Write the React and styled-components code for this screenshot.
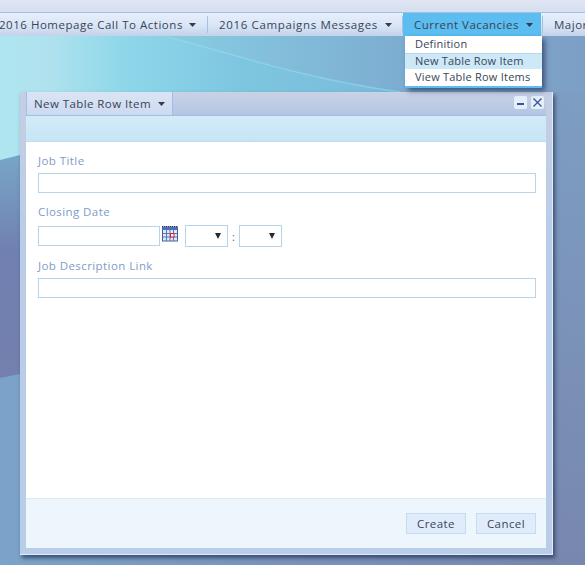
import React from "react";
import styled, { createGlobalStyle } from "styled-components";

const NAV_ITEMS = [
  { label: "2016 Homepage Call To Actions", width: 208, spacing: 0.52 },
  { label: "2016 Campaigns Messages", width: 195, spacing: 0.65 },
  { label: "Current Vacancies", width: 138, spacing: 0.47, active: true },
];

const MENU_ITEMS = ["Definition", "New Table Row Item", "View Table Row Items"];

const Arrow = ({ $big }) => (
  <ArrowIcon viewBox="0 0 7 4" preserveAspectRatio="none" $big={$big}>
    <path d="M0 0h7L3.5 4z" fill="currentColor" />
  </ArrowIcon>
);

const CalendarIcon = () => (
  <svg width="16" height="16" viewBox="0 0 16 16">
    <rect x="0.5" y="1" width="15" height="14" fill="#dfe8fb" stroke="#44609c" />
    <rect x="0.5" y="1" width="15" height="3" fill="#4a6fc0" />
    <path d="M0 0.5h16" stroke="#333" strokeDasharray="1 1" />
    <path d="M4.5 4v11M8 4v11M11.5 4v11M1 7.5h14M1 11h14" stroke="#5876b8" />
    <rect x="8.5" y="7.5" width="3.5" height="3.5" fill="#fff" stroke="#e02020" />
  </svg>
);

// desktop wallpaper behind the window
const Wallpaper = () => (
  <WallpaperSvg viewBox="0 0 585 565">
    <defs>
      <linearGradient id="wpBase" x1="0" y1="0" x2="1" y2="0">
        <stop offset="0" stopColor="#7ba3c9" />
        <stop offset="0.5" stopColor="#7a93bb" />
        <stop offset="1" stopColor="#7887ae" />
      </linearGradient>
      <linearGradient id="wpRight" x1="0" y1="0" x2="0" y2="1">
        <stop offset="0" stopColor="#7ea0c6" />
        <stop offset="1" stopColor="#7887ae" />
      </linearGradient>
      <linearGradient id="wpLeft" x1="0" y1="0" x2="0" y2="1">
        <stop offset="0" stopColor="#78a8c8" />
        <stop offset="0.45" stopColor="#7080b0" />
        <stop offset="1" stopColor="#7480ae" />
      </linearGradient>
      <linearGradient id="wpTeal" x1="0" y1="0" x2="1" y2="0">
        <stop offset="0" stopColor="#aee6f0" />
        <stop offset="0.12" stopColor="#b0e2ee" />
        <stop offset="0.3" stopColor="#8fd8ea" />
        <stop offset="0.6" stopColor="#7ec6e0" />
        <stop offset="1" stopColor="#79bad9" />
      </linearGradient>
      <linearGradient id="wpTop" x1="0" y1="0" x2="1" y2="0">
        <stop offset="0" stopColor="#a8dcea" />
        <stop offset="0.35" stopColor="#86c8e0" />
        <stop offset="0.7" stopColor="#7cacd0" />
        <stop offset="1" stopColor="#7d9fc5" />
      </linearGradient>
    </defs>
    <rect width="585" height="565" fill="url(#wpBase)" />
    <rect x="553" y="36" width="32" height="529" fill="url(#wpRight)" />
    <path d="M0 36H585V92H0Z" fill="url(#wpTop)" />
    <path d="M0 160L40 150V370L0 378Z" fill="url(#wpLeft)" />
    <path d="M0 36H165C235 55 310 80 400 92V120H40V150L0 160Z" fill="url(#wpTeal)" />
    <path
      d="M165 36C235 55 310 80 400 92"
      fill="none"
      stroke="#93dcec"
      strokeWidth="1.5"
      opacity="0.6"
    />
  </WallpaperSvg>
);

const App = () => {
  return (
    <>
      <GlobalStyle />
      <Page>
        <Wallpaper />
        <TopStrip />
        <NavBar>
          {NAV_ITEMS.map((item) => (
            <NavItem
              key={item.label}
              $width={item.width}
              $active={item.active}
              $spacing={item.spacing}
            >
              {item.label}
              <Arrow />
            </NavItem>
          ))}
          <NavItem $width={60} $spacing={0.5}>
            Major
          </NavItem>
        </NavBar>

        <Menu>
          {MENU_ITEMS.map((item, i) => (
            <MenuRow key={item} $hover={i === 1}>
              {item}
            </MenuRow>
          ))}
        </Menu>

        <Dialog>
          <TabBar>
            <Tab>
              New Table Row Item
              <Arrow />
            </Tab>
            <WindowButtons>
              <WindowButton aria-label="minimize">
                <svg width="9" height="9" viewBox="0 0 9 9">
                  <rect x="1" y="5" width="7" height="2" fill="#34549c" />
                </svg>
              </WindowButton>
              <WindowButton aria-label="close">
                <svg width="11" height="11" viewBox="0 0 11 11">
                  <path
                    d="M1.5 1.5l8 8M9.5 1.5l-8 8"
                    stroke="#34549c"
                    strokeWidth="1.3"
                  />
                </svg>
              </WindowButton>
            </WindowButtons>
          </TabBar>
          <Toolbar />
          <Body>
            <Field>
              <Label>Job Title</Label>
              <TextBox />
            </Field>
            <Field>
              <Label>Closing Date</Label>
              <DateRow>
                <DateBox />
                <CalendarSlot>
                  <CalendarIcon />
                </CalendarSlot>
                <TimeSelect>
                  <Arrow $big />
                </TimeSelect>
                <Colon>:</Colon>
                <TimeSelect>
                  <Arrow $big />
                </TimeSelect>
              </DateRow>
            </Field>
            <Field>
              <Label>Job Description Link</Label>
              <TextBox />
            </Field>
          </Body>
          <Footer>
            <FooterButton>Create</FooterButton>
            <FooterButton>Cancel</FooterButton>
          </Footer>
        </Dialog>
      </Page>
    </>
  );
};
export default App;

const GlobalStyle = createGlobalStyle`
  html, body {
    margin: 0;
    padding: 0;
    overflow: hidden;
  }
  body {
    font-family: "Open Sans", "Liberation Sans", sans-serif;
    font-size: 12px;
  }
`;

const Page = styled.div`
  position: relative;
  width: 585px;
  height: 565px;
  overflow: hidden;
`;

const WallpaperSvg = styled.svg`
  position: absolute;
  left: 0;
  top: 0;
  width: 585px;
  height: 565px;
`;

const TopStrip = styled.div`
  position: relative;
  height: 13px;
  background: linear-gradient(180deg, #dfe5f2, #d6dff0);
  border-bottom: 1px solid #a4bfe6;
  box-sizing: border-box;
`;

const NavBar = styled.div`
  position: relative;
  display: flex;
  align-items: stretch;
  height: 23px;
  overflow: hidden;
  background: linear-gradient(180deg, #e6effb 0%, #d9e5f6 55%, #c3d2ea 100%);
`;

const NavItem = styled.div`
  position: relative;
  display: flex;
  flex: none;
  align-items: center;
  box-sizing: border-box;
  width: ${(props) => props.$width}px;
  padding-left: 11px;
  margin-right: ${(props) => (props.$active ? 2 : 0)}px;
  font-size: 11.5px;
  letter-spacing: ${(props) => props.$spacing}px;
  color: #3a4457;
  white-space: nowrap;
  background: ${(props) => (props.$active ? "#5bbdf0" : "transparent")};
  &:first-child {
    padding-left: 0;
    text-indent: -1px;
  }
  &:first-child svg {
    margin-left: 6px;
  }
  &:not(:last-child)::after {
    content: "";
    display: block;
    position: absolute;
    right: ${(props) => (props.$active ? -2 : 0)}px;
    top: 3px;
    bottom: 3px;
    width: 1px;
    background: #a9c0e0;
  }
`;

const ArrowIcon = styled.svg`
  flex: none;
  width: ${(props) => (props.$big ? 6 : 7)}px;
  height: ${(props) => (props.$big ? 6 : 4)}px;
  margin-left: 7px;
  color: ${(props) => (props.$big ? "#222a38" : "#333c4c")};
`;

const Menu = styled.div`
  position: absolute;
  left: 405px;
  top: 36px;
  z-index: 2;
  box-sizing: border-box;
  width: 137px;
  height: 52px;
  background: #fff;
  border-bottom: 2px solid #5bbdf0;
  box-shadow: 3px 3px 5px rgba(30, 45, 85, 0.65);
`;

const MenuRow = styled.div`
  box-sizing: border-box;
  height: ${(props) => (props.$hover ? 16 : 17)}px;
  line-height: ${(props) => (props.$hover ? 14 : 16)}px;
  padding-left: 10px;
  font-size: 11px;
  letter-spacing: 0.22px;
  color: #3a4457;
  white-space: nowrap;
  background: ${(props) => (props.$hover ? "#cde9f8" : "transparent")};
  border-top: ${(props) => (props.$hover ? "1px solid #b5d6ea" : "none")};
`;

const Dialog = styled.div`
  position: absolute;
  left: 20px;
  top: 92px;
  z-index: 1;
  display: flex;
  flex-direction: column;
  box-sizing: border-box;
  width: 533px;
  height: 463px;
  padding: 0 6px 6px 6px;
  background: linear-gradient(180deg, #c6cee3 0%, #b9cde8 30%, #b9cde8 100%);
  border-right: 1px solid #e4ecf6;
  border-bottom: 1px solid #e4ecf6;
  box-shadow: 2px 3px 4px rgba(30, 45, 85, 0.7);
`;

const TabBar = styled.div`
  display: flex;
  flex: none;
  align-items: stretch;
  justify-content: space-between;
  height: 24px;
  border-bottom: 1px solid #a3bde8;
  box-sizing: border-box;
  background: linear-gradient(180deg, #c9d2e6, #b2c6e3);
`;

const Tab = styled.div`
  display: flex;
  align-items: center;
  box-sizing: border-box;
  width: 147px;
  padding-left: 7px;
  font-size: 11.5px;
  letter-spacing: 0.42px;
  color: #3a4457;
  white-space: nowrap;
  background: linear-gradient(180deg, #dbe4f4, #ccdaf0);
  border-right: 1px solid #a3bde8;
  border-left: 1px solid #a3bde8;
`;

const WindowButtons = styled.div`
  display: flex;
  align-items: center;
  gap: 4px;
  padding-bottom: 2px;
  margin-right: 2px;
`;

const WindowButton = styled.div`
  display: flex;
  align-items: center;
  justify-content: center;
  width: 13px;
  height: 13px;
  border-radius: 2px;
  background: #e4effa;
`;

const Toolbar = styled.div`
  flex: none;
  height: 26px;
  box-sizing: border-box;
  background: linear-gradient(180deg, #d2ebf8, #c7e5f5);
  border-bottom: 1px solid #bfdcee;
`;

const Body = styled.div`
  flex: 1;
  display: flex;
  flex-direction: column;
  gap: 11px;
  padding: 11px 10px 0 12px;
  background: #fff;
`;

const Field = styled.div`
  display: flex;
  flex-direction: column;
`;

const Label = styled.div`
  height: 20px;
  line-height: 16px;
  font-size: 11.5px;
  letter-spacing: 0.42px;
  color: #7f9cc6;
`;

const TextBox = styled.div`
  box-sizing: border-box;
  height: 20px;
  border: 1px solid #b8d4e8;
  background: #fff;
`;

const DateRow = styled.div`
  display: flex;
  align-items: center;
  height: 24px;
  margin-bottom: -1px;
`;

const DateBox = styled(TextBox)`
  width: 122px;
`;

const CalendarSlot = styled.div`
  display: flex;
  width: 23px;
  margin-left: 2px;
  margin-top: -5px;
`;

const TimeSelect = styled.div`
  display: flex;
  align-items: center;
  justify-content: flex-end;
  box-sizing: border-box;
  width: 43px;
  height: 22px;
  padding-right: 6px;
  border: 1px solid #b8d4e8;
`;

const Colon = styled.span`
  width: 11px;
  text-align: center;
  font-size: 11px;
  color: #5a6a80;
`;

const Footer = styled.div`
  flex: none;
  display: flex;
  justify-content: flex-end;
  gap: 10px;
  box-sizing: border-box;
  height: 50px;
  padding: 14px 10px 0 0;
  background: #eef6fd;
  border-top: 1px solid #dcecf6;
`;

const FooterButton = styled.div`
  display: flex;
  align-items: center;
  justify-content: center;
  box-sizing: border-box;
  width: 60px;
  height: 21px;
  font-size: 11.5px;
  letter-spacing: 0.42px;
  color: #3a4457;
  background: #e0ecfb;
  border: 1px solid #c3dcee;
`;
